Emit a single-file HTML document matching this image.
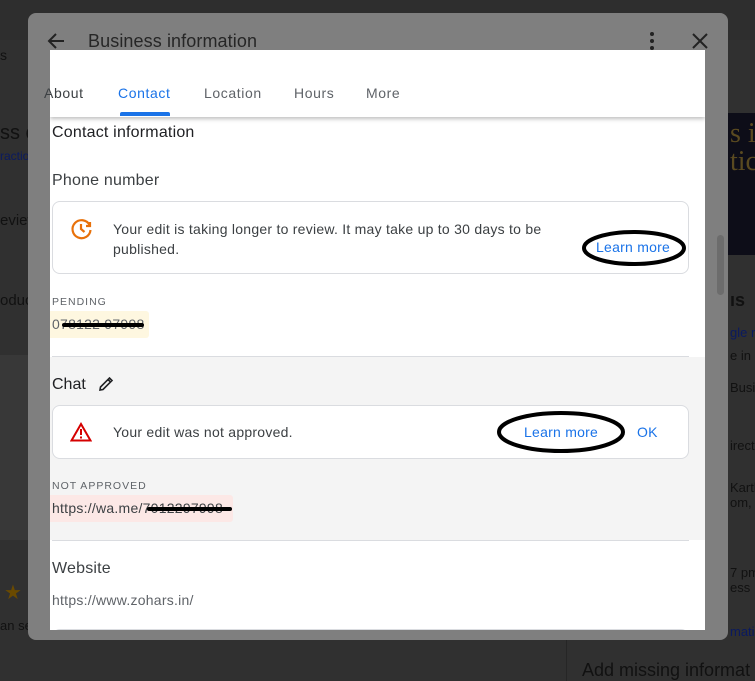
<!DOCTYPE html>
<html><head><meta charset="utf-8"><style>
*{margin:0;padding:0;box-sizing:border-box}
body{width:755px;height:681px;overflow:hidden;background:#303030;font-family:"Liberation Sans",Arial,sans-serif;position:relative}
.a{position:absolute;white-space:nowrap}
.card{position:absolute;border:1px solid #dadce0;border-radius:8px;background:#fff}
.blue{color:#1a73e8}
.t14{font-size:14px;letter-spacing:0.25px}
</style></head><body>
<!-- background page -->
<div class="a" style="left:0;top:0;width:755px;height:40px;background:#2e2e2e"></div>
<div class="a" style="left:0;top:355px;width:28px;height:185px;background:#383838"></div>
<div class="a" style="left:0;top:47px;font-size:14px;color:#111">s</div>
<div class="a" style="left:0;top:122px;font-size:20px;color:#111">ss c</div>
<div class="a" style="left:0;top:149px;font-size:12px;color:#0a1a60">ractio</div>
<div class="a" style="left:0;top:212px;font-size:15px;color:#111">eview</div>
<div class="a" style="left:0;top:292px;font-size:15px;color:#111">oduc</div>
<div class="a" style="left:4px;top:580px;font-size:20px;color:#6a4a00">★</div>
<div class="a" style="left:0;top:618px;font-size:13px;color:#111">an se</div>
<div class="a" style="left:728px;top:113px;width:27px;height:142px;background:#0d0d18"></div>
<div class="a" style="left:730px;top:120px;font-size:28px;color:#5a4a20;font-family:'Liberation Serif',serif;line-height:28px">s i<br>tic</div>
<div class="a" style="left:566px;top:640px;width:1px;height:41px;background:#262626"></div>
<div class="a" style="left:582px;top:660px;font-size:18px;color:#111">Add missing informat</div>
<div class="a" style="left:730px;top:290px;font-size:18px;font-weight:bold;color:#111">ıs</div>
<div class="a" style="left:730px;top:325px;font-size:13px;color:#0a1a60">gle r</div>
<div class="a" style="left:730px;top:348px;font-size:13px;color:#111">e in K</div>
<div class="a" style="left:730px;top:380px;font-size:13px;color:#111">Busi</div>
<div class="a" style="left:730px;top:438px;font-size:13px;color:#111">irect</div>
<div class="a" style="left:730px;top:480px;font-size:13px;color:#111">Karth<br>om, I</div>
<div class="a" style="left:730px;top:565px;font-size:13px;color:#111">7 pm<br>ess</div>
<div class="a" style="left:730px;top:624px;font-size:13px;color:#0a1a60">matic</div>

<!-- modal -->
<div class="a" style="left:28px;top:13px;width:700px;height:627px;background:#7f7f7f;border-radius:8px"></div>
<svg class="a" style="left:46px;top:31px" width="20" height="20" viewBox="0 0 20 20"><path d="M18 10H3M10 3L3 10L10 17" stroke="#222" stroke-width="2" fill="none"/></svg>
<div class="a" style="left:88px;top:31px;font-size:18px;color:#262626;letter-spacing:0.1px">Business information</div>
<svg class="a" style="left:648px;top:31px" width="8" height="20"><circle cx="4" cy="3" r="2" fill="#222"/><circle cx="4" cy="10" r="2" fill="#222"/><circle cx="4" cy="17" r="2" fill="#222"/></svg>
<svg class="a" style="left:692px;top:33px" width="16" height="16"><path d="M1 1L15 15M15 1L1 15" stroke="#222" stroke-width="2"/></svg>
<div class="a" style="left:717px;top:235px;width:7px;height:60px;background:#6c6c6c;border-radius:4px"></div>

<!-- white panel -->
<div class="a" style="left:50px;top:50px;width:655px;height:580px;background:#fff;overflow:hidden">
 <div class="a" style="left:0;top:307px;width:655px;height:183px;background:#f4f4f4"></div>
 <div class="a" style="left:0;top:0;width:655px;height:67px;background:#fff;box-shadow:0 2px 4px rgba(0,0,0,.25)"></div>
 <div class="a blue t14" style="left:68px;top:35px;letter-spacing:0.6px">Contact</div>
 <div class="a" style="left:70px;top:62px;width:50px;height:4px;background:#1a73e8;border-radius:2px 2px 0 0"></div>
 <div class="a t14" style="left:154px;top:35px;color:#5f6368;letter-spacing:0.6px">Location</div>
 <div class="a t14" style="left:244px;top:35px;color:#5f6368;letter-spacing:0.6px">Hours</div>
 <div class="a t14" style="left:316px;top:35px;color:#5f6368;letter-spacing:0.6px">More</div>
 <div class="a" style="left:2px;top:74px;font-size:16px;color:#202124;letter-spacing:0.2px">Contact information</div>
 <div class="a" style="left:2px;top:122px;font-size:16px;color:#3c4043;letter-spacing:0.2px">Phone number</div>
 <div class="card" style="left:2px;top:151px;width:637px;height:73px">
  <svg class="a" style="left:17px;top:15px" width="24" height="24" viewBox="0 0 24 24"><path d="M19.5 8A9 9 0 1 0 20.5 13" stroke="#e8710a" stroke-width="2.2" fill="none"/><path d="M16 9L20 9L20 5" stroke="#e8710a" stroke-width="2.2" fill="none"/><path d="M11 7V12L14.5 15" stroke="#e8710a" stroke-width="2.2" fill="none"/></svg>
  <div class="a t14" style="left:60px;top:17px;color:#3c4043;line-height:20px">Your edit is taking longer to review. It may take up to 30 days to be<br>published.</div>
  <div class="a blue t14" style="left:543px;top:37px">Learn more</div>
 </div>
 <svg class="a" style="left:530px;top:178px" width="110" height="42"><ellipse cx="54" cy="20" rx="50" ry="16" stroke="#000" stroke-width="4" fill="none"/></svg>
 <div class="a" style="left:2px;top:246px;font-size:10.5px;letter-spacing:1px;color:#5f6368">PENDING</div>
 <div class="a" style="left:-3px;top:261px;width:102px;height:27px;background:#fef7e0;border-radius:3px"></div>
 <div class="a t14" style="left:2px;top:266px;color:#5f6368">078122 97998</div>
 <div class="a" style="left:12px;top:273px;width:82px;height:4px;background:#000;border-radius:2px"></div>
 <div class="a" style="left:2px;top:306px;width:637px;height:1px;background:#dadce0"></div>
 <div class="a" style="left:2px;top:326px;font-size:16px;color:#202124">Chat</div>
 <svg class="a" style="left:47px;top:325px" width="18" height="18" viewBox="0 0 18 18"><path d="M3 15L3.5 12L12.5 3L15 5.5L6 14.5Z M11 4.5L13.5 7" stroke="#202124" stroke-width="1.6" fill="none"/></svg>
 <div class="card" style="left:2px;top:355px;width:637px;height:54px">
  <svg class="a" style="left:17px;top:16px" width="22" height="20" viewBox="0 0 22 20"><path d="M11 2L20.5 18.5H1.5Z" stroke="#d50000" stroke-width="2" fill="none"/><rect x="10" y="7" width="2" height="6" fill="#d50000"/><rect x="10" y="14.5" width="2" height="2" fill="#d50000"/></svg>
  <div class="a t14" style="left:60px;top:18px;color:#3c4043">Your edit was not approved.</div>
  <div class="a blue t14" style="left:471px;top:18px">Learn more</div>
  <div class="a blue t14" style="left:584px;top:18px">OK</div>
 </div>
 <svg class="a" style="left:444px;top:357px" width="136" height="50"><ellipse cx="67" cy="25" rx="62" ry="19" stroke="#000" stroke-width="4" fill="none"/></svg>
 <div class="a" style="left:2px;top:430px;font-size:10.5px;letter-spacing:1px;color:#5f6368">NOT APPROVED</div>
 <div class="a" style="left:-3px;top:445px;width:186px;height:27px;background:#fce8e6;border-radius:3px"></div>
 <div class="a t14" style="left:2px;top:450px;color:#3c4043">https://wa.me/7012297998</div>
 <div class="a" style="left:97px;top:457px;width:85px;height:4px;background:#000;border-radius:2px"></div>
 <div class="a" style="left:2px;top:490px;width:637px;height:1px;background:#dadce0"></div>
 <div class="a" style="left:2px;top:510px;font-size:16px;color:#3c4043;letter-spacing:0.2px">Website</div>
 <div class="a t14" style="left:2px;top:542px;color:#5f6368">https://www.zohars.in/</div>
 <div class="card" style="left:2px;top:579px;width:637px;height:60px"></div>
</div>
<div class="a t14" style="left:44px;top:85px;color:#3c4043;letter-spacing:0.6px">About</div>
</body></html>
